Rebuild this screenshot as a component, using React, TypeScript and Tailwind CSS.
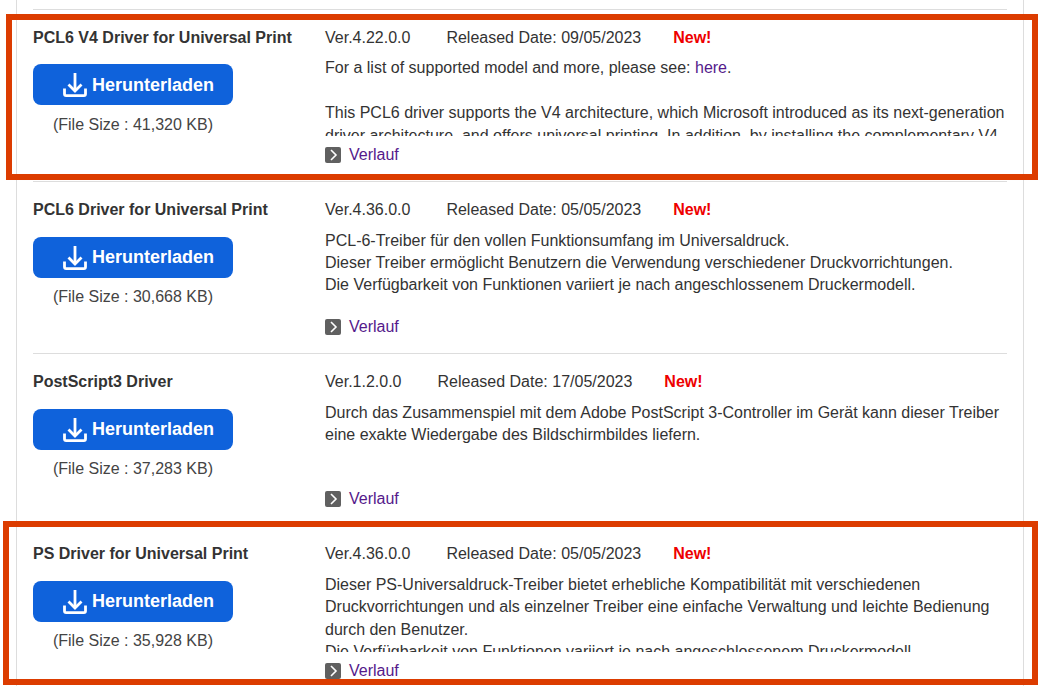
import React from 'react';

interface Driver {
  name: string;
  version: string;
  date: string;
  size: string;
  body: React.ReactNode;
}

const drivers: Driver[] = [
  {
    name: 'PCL6 V4 Driver for Universal Print',
    version: 'Ver.4.22.0.0',
    date: '09/05/2023',
    size: '41,320',
    body: (
      <>
        <p>
          For a list of supported model and more, please see: <a className="text-[#551a8b]">here</a>.
        </p>
        <p>&nbsp;</p>
        <p>
          This PCL6 driver supports the V4 architecture, which Microsoft introduced as its next-generation driver
          architecture, and offers universal printing. In addition, by installing the complementary V4
        </p>
      </>
    ),
  },
  {
    name: 'PCL6 Driver for Universal Print',
    version: 'Ver.4.36.0.0',
    date: '05/05/2023',
    size: '30,668',
    body: (
      <>
        <p>PCL-6-Treiber für den vollen Funktionsumfang im Universaldruck.</p>
        <p>Dieser Treiber ermöglicht Benutzern die Verwendung verschiedener Druckvorrichtungen.</p>
        <p>Die Verfügbarkeit von Funktionen variiert je nach angeschlossenem Druckermodell.</p>
      </>
    ),
  },
  {
    name: 'PostScript3 Driver',
    version: 'Ver.1.2.0.0',
    date: '17/05/2023',
    size: '37,283',
    body: (
      <p>
        Durch das Zusammenspiel mit dem Adobe PostScript 3-Controller im Gerät kann dieser Treiber eine exakte
        Wiedergabe des Bildschirmbildes liefern.
      </p>
    ),
  },
  {
    name: 'PS Driver for Universal Print',
    version: 'Ver.4.36.0.0',
    date: '05/05/2023',
    size: '35,928',
    body: (
      <>
        <p>
          Dieser PS-Universaldruck-Treiber bietet erhebliche Kompatibilität mit verschiedenen Druckvorrichtungen und
          als einzelner Treiber eine einfache Verwaltung und leichte Bedienung durch den Benutzer.
        </p>
        <p>Die Verfügbarkeit von Funktionen variiert je nach angeschlossenem Druckermodell.</p>
      </>
    ),
  },
];

function DownloadIcon() {
  return (
    <svg width="24" height="24" viewBox="0 0 24 24" fill="none" stroke="currentColor" strokeWidth="2.8" className="shrink-0">
      <path d="M12 0v18" />
      <path d="M5.5 11.5l6.5 6.5 6.5-6.5" />
      <path d="M1.5 15.5v5.5a1.6 1.6 0 0 0 1.6 1.6h17.8a1.6 1.6 0 0 0 1.6-1.6v-5.5" />
    </svg>
  );
}

function DriverRow({ driver }: { driver: Driver }) {
  return (
    <div className="flex h-[172.15px] border-b border-[#dddddd] pt-[17px]">
      <div className="w-[292px] shrink-0">
        <h3 className="text-[16px] leading-[22px] font-bold text-[#333333]">{driver.name}</h3>
        <button className="mt-[15.4px] flex h-[41px] w-[200px] items-center gap-[5px] rounded-[8px] bg-[#0f62db] pl-[30px] pt-[1px] text-[18px] font-bold text-white">
          <DownloadIcon />
          Herunterladen
        </button>
        <p className="mt-[8.6px] w-[200px] text-center text-[16px] leading-[22px] text-[#444444]">
          (File Size : {driver.size} KB)
        </p>
      </div>
      <div className="min-w-0 flex-1">
        <div className="flex h-[22px] text-[16px] leading-[22px] text-[#333333]">
          <span className="mr-[36px]">{driver.version}</span>
          <span className="mr-[32px]">Released Date: {driver.date}</span>
          <span className="font-bold text-[#ee0000]">New!</span>
        </div>
        <div className="mt-[8.4px] h-[78.6px] overflow-hidden text-[16px] leading-[22.4px] text-[#333333]">
          {driver.body}
        </div>
        <div className="mt-[8px] flex items-center gap-[8px] text-[16px] leading-[22px] text-[#551a8b]">
          <span className="flex h-[16px] w-[16px] items-center justify-center rounded-[2px] bg-[#606060]">
            <svg width="10" height="12" viewBox="0 0 10 12" fill="none" stroke="#ffffff" strokeWidth="1.6">
              <path d="M3 1L8 6 3 11" />
            </svg>
          </span>
          Verlauf
        </div>
      </div>
    </div>
  );
}

export default function App() {
  return (
    <div className="relative h-[686px] w-[1049px] overflow-hidden bg-white font-['Liberation_Sans',Arial,sans-serif]">
      <div className="mx-[16px] h-full w-[1008px] border-x border-[#dddddd] px-[16px]">
        <div className="h-[10px] border-b border-[#dddddd]" />
        {drivers.map((driver) => (
          <DriverRow key={driver.name} driver={driver} />
        ))}
      </div>
      <div className="pointer-events-none absolute left-[6px] top-[14px] h-[166px] w-[1032px] border-[6px] border-[#dc3c00]" />
      <div className="pointer-events-none absolute left-[3px] top-[521px] h-[164px] w-[1035px] border-[6px] border-[#dc3c00]" />
    </div>
  );
}
